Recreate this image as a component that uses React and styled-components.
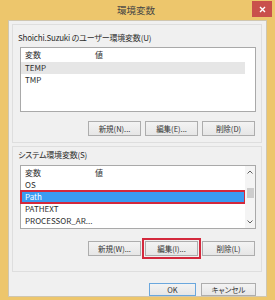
import React from 'react';
import styled, { createGlobalStyle } from 'styled-components';

const Global = createGlobalStyle`
  html, body { margin: 0; padding: 0; background: #fff; }
  * { box-sizing: border-box; }
`;

const Frame = styled.div`
  width: 275px;
  height: 300px;
  background: #edc66c;
  padding: 0 8px 3px 8px;
  display: flex;
  flex-direction: column;
  font-family: "Noto Sans CJK JP", "Noto Sans", sans-serif;
  font-feature-settings: "palt";
  color: #2e2e2e;
  font-size: 8px;
`;

const TitleBar = styled.div`
  height: 20px;
  display: grid;
  grid-template-columns: 1fr auto 1fr;
  align-items: start;
  margin: 0 -5px 0 -8px;
`;

const Title = styled.div`
  grid-column: 2;
  font-size: 9.5px;
  line-height: 20px;
  color: #444;
`;

const Close = styled.div`
  grid-column: 3;
  justify-self: end;
  margin-top: 1px;
  width: 20px;
  height: 16px;
  background: #c9504b;
  display: flex;
  align-items: center;
  justify-content: center;
`;

const Body = styled.div`
  flex: 1;
  background: #f0f0f0;
  border: 1px solid #cfc6b0;
  padding: 3px 4px 0 3px;
  display: flex;
  flex-direction: column;
`;

const Panel = styled.div`
  border: 1px solid #dedede;
  height: ${p => p.$h}px;
  padding: ${p => p.$top}px 5px 0 7px;
  margin-bottom: ${p => p.$mb}px;
  display: flex;
  flex-direction: column;
`;

const Label = styled.div`
  height: 12px;
  line-height: 12px;
  margin-left: -2px;
  margin-bottom: ${p => p.$mb}px;
  letter-spacing: -0.2px;
  white-space: nowrap;
`;

const List = styled.div`
  height: ${p => p.$h}px;
  border: 1px solid #a9a9a9;
  background: #fff;
  display: flex;
`;

const Cols = styled.div`
  flex: 1;
  min-width: 0;
  display: flex;
  flex-direction: column;
`;

const Row = styled.div`
  height: ${p => p.$h || 12}px;
  line-height: ${p => p.$h || 12}px;
  display: flex;
  width: 224px;
  background: ${p => (p.$sel ? '#3a9bf2' : p.$dim ? '#e6e6e6' : 'transparent')};
  color: ${p => (p.$sel ? '#fff' : 'inherit')};
  outline: ${p => (p.$mark ? '2px solid #d3283c' : 'none')};
  outline-offset: -1px;
`;

const Cell = styled.div`
  width: ${p => p.$w}px;
  flex-shrink: 0;
  padding-left: 4px;
  white-space: nowrap;
`;

const Scroll = styled.div`
  width: 10px;
  background: #f4f4f4;
  display: flex;
  flex-direction: column;
  align-items: center;
  justify-content: space-between;
  padding: 4px 0 4px;
`;

const Thumb = styled.div`
  width: 7px;
  height: 10px;
  background: #cdcdcd;
  margin-top: -8px;
`;

const Buttons = styled.div`
  display: flex;
  justify-content: flex-end;
  gap: ${p => p.$gap || 4}px;
  margin-top: ${p => p.$mt}px;
  margin-right: ${p => p.$mr || 1}px;
`;

const Button = styled.div`
  width: ${p => p.$w || 53}px;
  height: ${p => p.$h || 15}px;
  border: 1px solid ${p => (p.$def ? '#6aa7dd' : '#adadad')};
  background: linear-gradient(#f3f3f3, #e6e6e6);
  display: flex;
  align-items: center;
  justify-content: center;
  font-size: 7.5px;
  color: #333;
  outline: ${p => (p.$mark ? '2px solid #d3283c' : 'none')};
  outline-offset: 1px;
  white-space: nowrap;
`;

const Chevron = ({ up }) => (
  <svg width="6" height="4" viewBox="0 0 6 4">
    <path d={up ? 'M0.5 3.5 L3 1 L5.5 3.5' : 'M0.5 0.5 L3 3 L5.5 0.5'} fill="none" stroke="#606060" strokeWidth="1" />
  </svg>
);

const VarRow = ({ name, value = '', ...rest }) => (
  <Row {...rest}>
    <Cell $w={70}>{name}</Cell>
    <Cell $w={154}>{value}</Cell>
  </Row>
);

export default function App() {
  return (
    <>
      <Global />
      <Frame>
        <TitleBar>
          <Title>環境変数</Title>
          <Close>
            <svg width="7" height="7" viewBox="0 0 7 7">
              <path d="M1 1 L6 6 M6 1 L1 6" stroke="#fff" strokeWidth="1.4" />
            </svg>
          </Close>
        </TitleBar>
        <Body>
          <Panel $h={119} $top={7} $mb={3}>
            <Label $mb={3}>Shoichi.Suzuki のユーザー環境変数(U)</Label>
            <List $h={65}>
              <Cols>
                <VarRow name="変数" value="値" $h={14} />
                <VarRow name="TEMP" $dim />
                <VarRow name="TMP" />
              </Cols>
            </List>
            <Buttons $mt={9}>
              <Button>新規(N)...</Button>
              <Button>編集(E)...</Button>
              <Button>削除(D)</Button>
            </Buttons>
          </Panel>
          <Panel $h={126} $top={2} $mb={11}>
            <Label $mb={4}>システム環境変数(S)</Label>
            <List $h={64}>
              <Cols>
                <VarRow name="変数" value="値" $h={13} />
                <VarRow name="OS" />
                <VarRow name="Path" $sel $mark />
                <VarRow name="PATHEXT" />
                <VarRow name="PROCESSOR_AR..." />
              </Cols>
              <Scroll>
                <Chevron up />
                <Thumb />
                <Chevron />
              </Scroll>
            </List>
            <Buttons $mt={12}>
              <Button>新規(W)...</Button>
              <Button $mark>編集(I)...</Button>
              <Button>削除(L)</Button>
            </Buttons>
          </Panel>
          <Buttons $gap={5} $mr={6}>
            <Button $w={47} $h={13} $def>OK</Button>
            <Button $w={55} $h={13}>キャンセル</Button>
          </Buttons>
        </Body>
      </Frame>
    </>
  );
}
